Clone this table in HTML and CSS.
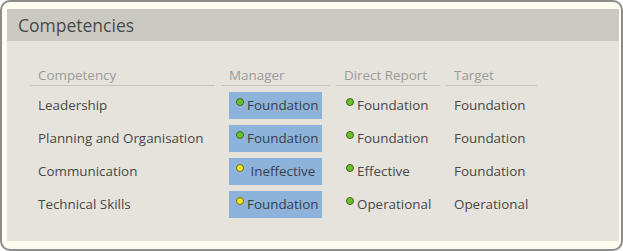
FILE: index.html
```html
<!DOCTYPE html>
<html>
<head>
<meta charset="utf-8">
<link rel="stylesheet" href="styles.css">
</head>
<body>
<div class="frame">
  <div class="panel">
    <div class="panel-head">Competencies</div>
    <div class="panel-body">
      <div class="grid">
        <div class="th">Competency</div>
        <div class="th">Manager</div>
        <div class="th">Direct Report</div>
        <div class="th">Target</div>

        <div class="td">Leadership</div>
        <div class="td"><span class="box"><span class="dot green"></span>Foundation</span></div>
        <div class="td"><span class="dot green"></span>Foundation</div>
        <div class="td">Foundation</div>

        <div class="td">Planning and Organisation</div>
        <div class="td"><span class="box"><span class="dot green"></span>Foundation</span></div>
        <div class="td"><span class="dot green"></span>Foundation</div>
        <div class="td">Foundation</div>

        <div class="td">Communication</div>
        <div class="td"><span class="box"><span class="dot yellow"></span>&nbsp;Ineffective</span></div>
        <div class="td"><span class="dot green"></span>Effective</div>
        <div class="td">Foundation</div>

        <div class="td">Technical Skills</div>
        <div class="td"><span class="box"><span class="dot yellow"></span>Foundation</span></div>
        <div class="td"><span class="dot green"></span>Operational</div>
        <div class="td">Operational</div>
      </div>
    </div>
  </div>
</div>
</body>
</html>
```
FILE: styles.css
```css
html, body {
  margin: 0;
  padding: 0;
}
body {
  width: 623px;
  height: 251px;
  font-family: "Open Sans", "Noto Sans", sans-serif;
  background: #ffffff;
}
.frame {
  box-sizing: border-box;
  width: 623px;
  height: 251px;
  border: 2px solid #8c8c8c;
  border-radius: 10px;
  background: #fffcf0;
  padding: 7px 2px 8px 5px;
}
.panel {
  height: 100%;
  display: flex;
  flex-direction: column;
}
.panel-head {
  height: 32px;
  line-height: 32px;
  background: #cbcac2;
  color: #4a4a4c;
  font-size: 17.5px;
  padding-left: 11px;
}
.panel-body {
  flex: 1;
  background: #e5e3dc;
  padding: 25px 0 0 23px;
}
.grid {
  display: grid;
  grid-template-columns: 185px 109px 104px 91px;
  column-gap: 6px;
  grid-template-rows: 20px repeat(4, 27px);
  row-gap: 6px;
  font-size: 13.4px;
  color: #48484a;
}
.th {
  color: #9b9b9b;
  border-bottom: 1px solid #c6c4bd;
  padding-left: 8px;
  line-height: 18px;
}
.td {
  padding-left: 8px;
  line-height: 27px;
  white-space: nowrap;
}
.box {
  display: block;
  width: 93px;
  box-sizing: border-box;
  height: 27px;
  background: #8db3db;
  padding-left: 5px;
  color: #3a4049;
}
.dot {
  display: inline-block;
  width: 6px;
  height: 6px;
  border-radius: 50%;
  border: 1px solid #4f6a2a;
  margin-left: 2px;
  margin-right: 3px;
  vertical-align: 4px;
}
.green {
  background: #6bbf2a;
  border-color: #3f6b1e;
}
.yellow {
  background: #f2e31e;
  border-color: #7a6f1a;
}
```
